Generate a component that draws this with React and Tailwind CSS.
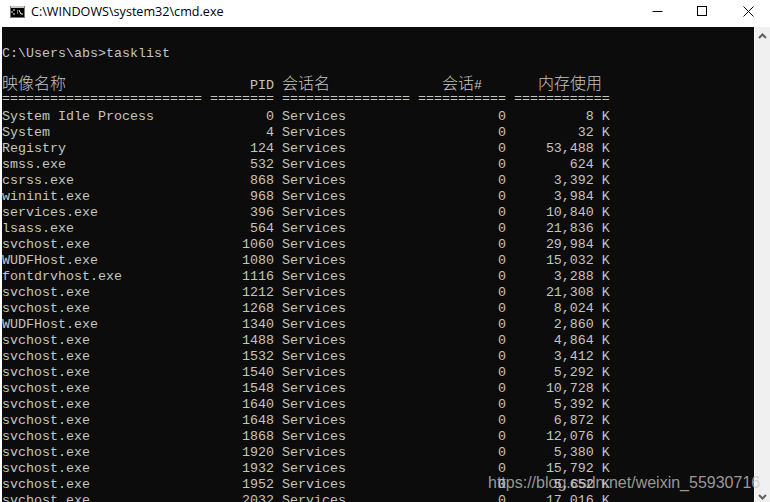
const rows = [
  ["System Idle Process", 0, "8"],
  ["System", 4, "32"],
  ["Registry", 124, "53,488"],
  ["smss.exe", 532, "624"],
  ["csrss.exe", 868, "3,392"],
  ["wininit.exe", 968, "3,984"],
  ["services.exe", 396, "10,840"],
  ["lsass.exe", 564, "21,836"],
  ["svchost.exe", 1060, "29,984"],
  ["WUDFHost.exe", 1080, "15,032"],
  ["fontdrvhost.exe", 1116, "3,288"],
  ["svchost.exe", 1212, "21,308"],
  ["svchost.exe", 1268, "8,024"],
  ["WUDFHost.exe", 1340, "2,860"],
  ["svchost.exe", 1488, "4,864"],
  ["svchost.exe", 1532, "3,412"],
  ["svchost.exe", 1540, "5,292"],
  ["svchost.exe", 1548, "10,728"],
  ["svchost.exe", 1640, "5,392"],
  ["svchost.exe", 1648, "6,872"],
  ["svchost.exe", 1868, "12,076"],
  ["svchost.exe", 1920, "5,380"],
  ["svchost.exe", 1932, "15,792"],
  ["svchost.exe", 1952, "5,652"],
  ["svchost.exe", 2032, "17,016"],
];

const line = ([name, pid, mem]) =>
  name.padEnd(25) + " " + String(pid).padStart(8) + " " + "Services".padEnd(16) + " " + "0".padStart(11) + " " + (mem + " K").padStart(12);

function Cjk({ children }) {
  return <span className="text-[16px] [font-family:'Noto_Sans_CJK_SC',sans-serif] font-light">{children}</span>;
}

export default function App() {
  return (
    <div className="relative h-[502px] w-[770px] overflow-hidden bg-white flex flex-col">
      <div className="h-[27px] shrink-0 flex items-center text-black">
        <svg width="15" height="12" viewBox="0 0 15 12" className="ml-[10px] mb-[3px]">
          <rect width="15" height="12" fill="#7a7a7a" />
          <rect x="1" y="0" width="13" height="2" fill="#c8c8c8" />
          <rect x="1" y="2" width="13" height="9" fill="#000000" />
          <path d="M3 4H5M2 5V7M3 8H5M7 5H8M7 7H8M9 4L11 8M11 8H13" fill="none" stroke="#f0f0f0" strokeWidth="1" />
        </svg>
        <span className="ml-[6px] mb-[3px] text-[12.6px] leading-[16px] [font-family:'Open_Sans',sans-serif]">C:\WINDOWS\system32\cmd.exe</span>
        <div className="ml-auto flex items-center mb-[5px] mr-[16px]">
          <svg width="11" height="11" viewBox="0 0 11 11" className="mr-[34px]">
            <path d="M0.5 5.5H10.5" stroke="#000" strokeWidth="1" />
          </svg>
          <svg width="10" height="10" viewBox="0 0 10 10" className="mr-[36px]">
            <rect x="0.5" y="0.5" width="9" height="9" fill="none" stroke="#000" />
          </svg>
          <svg width="11" height="11" viewBox="0 0 11 11">
            <path d="M0.5 0.5L10.5 10.5M10.5 0.5L0.5 10.5" stroke="#000" strokeWidth="1" />
          </svg>
        </div>
      </div>
      <div className="flex-1 min-h-0 flex pl-[2px]">
        <div className="flex-1 min-w-0 bg-[#0c0c0c] text-[#c4c4c4] overflow-hidden whitespace-pre text-[13.333px] leading-[16px] [font-family:'Liberation_Mono',monospace]">
          <div className="h-[19px]" />
          <div className="h-4">{"C:\\Users\\abs>tasklist"}</div>
          <div className="h-3" />
          <div className="h-[17px]">
            <Cjk>映像名称</Cjk>{" ".repeat(23) + "PID "}<Cjk>会话名</Cjk>{" ".repeat(14)}<Cjk>会话</Cjk>{"#" + " ".repeat(7)}<Cjk>内存使用</Cjk>
          </div>
          <div className="h-[18px]">{"=".repeat(25) + " " + "=".repeat(8) + " " + "=".repeat(16) + " " + "=".repeat(11) + " " + "=".repeat(12)}</div>
          {rows.map((r, i) => (
            <div key={i} className="h-4">{line(r)}</div>
          ))}
        </div>
        <div className="w-[15px] ml-px shrink-0 bg-[#f0f0f0] flex flex-col items-center justify-between pt-[6px] pb-[2px]">
          <svg width="9" height="6" viewBox="0 0 9 6">
            <path d="M1 5L4.5 1.5L8 5" fill="none" stroke="#606060" strokeWidth="2" />
          </svg>
          <svg width="9" height="6" viewBox="0 0 9 6">
            <path d="M1 1L4.5 4.5L8 1" fill="none" stroke="#606060" strokeWidth="2" />
          </svg>
        </div>
      </div>
      <div className="absolute left-[488px] top-[473px] whitespace-nowrap text-[16px] leading-[20px] text-[#c8c8c8]/75 [font-family:'Liberation_Sans',sans-serif]">
        https://blog.csdn.net/weixin_55930716
      </div>
    </div>
  );
}
